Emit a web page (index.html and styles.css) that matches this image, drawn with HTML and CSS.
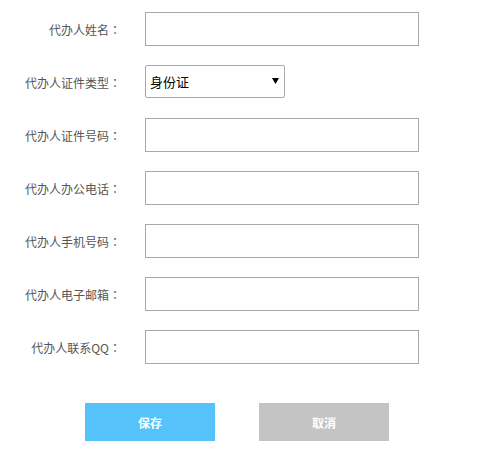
FILE: index.html
```html
<!DOCTYPE html>
<html lang="zh-CN">
<head>
<meta charset="utf-8">
<title>代办人信息</title>
<link rel="stylesheet" href="styles.css">
</head>
<body>
<form class="form">
  <div class="row"><label class="label">代办人姓名<span class="colon" lang="ja">：</span></label><input class="field" type="text"></div>
  <div class="row"><label class="label">代办人证件类型<span class="colon" lang="ja">：</span></label>
    <span class="select-wrap">
      <select class="select"><option>身份证</option></select>
      <svg class="arrow" width="7" height="6" viewBox="0 0 7 6"><path d="M0 0H7L3.5 6Z" fill="#000"/></svg>
    </span>
  </div>
  <div class="row"><label class="label">代办人证件号码<span class="colon" lang="ja">：</span></label><input class="field" type="text"></div>
  <div class="row"><label class="label">代办人办公电话<span class="colon" lang="ja">：</span></label><input class="field" type="text"></div>
  <div class="row"><label class="label">代办人手机号码<span class="colon" lang="ja">：</span></label><input class="field" type="text"></div>
  <div class="row"><label class="label">代办人电子邮箱<span class="colon" lang="ja">：</span></label><input class="field" type="text"></div>
  <div class="row"><label class="label">代办人联系QQ<span class="colon" lang="ja">：</span></label><input class="field" type="text"></div>
  <div class="actions">
    <button class="btn btn-save" type="button">保存</button>
    <button class="btn btn-cancel" type="button">取消</button>
  </div>
</form>
</body>
</html>
```
FILE: styles.css
```css
html, body {
  margin: 0;
  padding: 0;
  background: #fff;
}
body {
  font-family: "Noto Sans CJK SC", "Noto Sans", sans-serif;
  font-size: 12px;
  color: #555;
}
.form {
  padding-top: 12px;
}
.row {
  display: flex;
  align-items: center;
  height: 34px;
  margin-bottom: 19px;
}
.label {
  width: 121px;
  text-align: right;
  margin-right: 24px;
  font-size: 12px;
  color: #555;
  white-space: nowrap;
}
.colon {
  font-family: "Noto Sans CJK JP", sans-serif;
}
.field {
  box-sizing: border-box;
  width: 274px;
  height: 34px;
  margin: 0;
  padding: 0 6px;
  border: 1px solid #a9a9a9;
  outline: none;
  background: #fff;
}
.select-wrap {
  position: relative;
  display: block;
  align-self: flex-start;
  width: 140px;
  height: 33px;
}
.select {
  box-sizing: border-box;
  appearance: none;
  -webkit-appearance: none;
  width: 140px;
  height: 33px;
  margin: 0;
  padding: 0 0 0 4px;
  border: 1px solid #a9a9a9;
  border-radius: 2px;
  background: #fff;
  font-family: "Noto Sans CJK SC", sans-serif;
  font-size: 13px;
  color: #000;
}
.arrow {
  position: absolute;
  left: 127px;
  top: 13px;
}
.actions {
  display: flex;
  gap: 44px;
  padding-left: 85px;
  margin-top: 39px;
}
.btn {
  width: 130px;
  height: 38px;
  border: none;
  margin: 0;
  padding: 0;
  color: #fff;
  font-family: "Noto Sans CJK SC", sans-serif;
  font-size: 12px;
  font-weight: bold;
}
.btn-save {
  background: #55c3fa;
}
.btn-cancel {
  background: #c4c4c4;
}
```
